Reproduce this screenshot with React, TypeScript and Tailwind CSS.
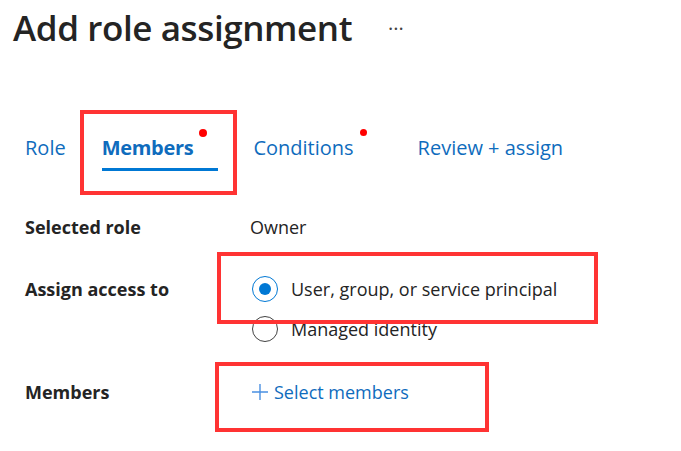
import React from "react";

const font = { fontFamily: '"Open Sans", "Noto Sans", sans-serif' };

export default function App() {
  return (
    <div className="relative w-[681px] h-[451px] bg-white overflow-hidden text-[#242424]" style={font}>
      {/* Title */}
      <div className="flex items-center pl-[13px] pt-[6px] h-[50px]">
        <h1 className="text-[35px] leading-[40px] font-semibold tracking-[-0.4px] text-[#242424]">Add role assignment</h1>
        <span className="ml-[36px] text-[20px] leading-none text-[#424242] mt-[2px]">···</span>
      </div>

      {/* Tabs */}
      <div className="flex items-end mt-[78px] pl-[25px] h-[40px]">
        <div className="relative text-[20px] leading-[24px] text-[#0f6cbd] pb-[8px]">Role</div>
        <div className="relative ml-[36px] text-[20px] leading-[24px] font-bold tracking-[-0.3px] text-[#0f6cbd] pb-[8px]">
          Members
          <span className="absolute right-[-14px] top-[-7px] w-[8px] h-[8px] rounded-full bg-[#ff0000]" />
          <span className="absolute left-0 right-[-25px] bottom-[-3px] h-[3px] bg-[#0078d4]" />
        </div>
        <div className="relative ml-[60px] text-[20px] leading-[24px] text-[#0f6cbd] pb-[8px]">
          Conditions
          <span className="absolute right-[-13px] top-[-7px] w-[7px] h-[7px] rounded-full bg-[#ff0000]" />
        </div>
        <div className="ml-[64px] text-[20px] leading-[24px] text-[#0f6cbd] pb-[8px]">Review + assign</div>
      </div>

      {/* Form rows */}
      <div className="pl-[25px] mt-[46px] text-[18px] leading-[24px]">
        <div className="flex items-center h-[26px]">
          <div className="w-[225px] font-bold">Selected role</div>
          <div>Owner</div>
        </div>
        <div className="flex items-start mt-[36px]">
          <div className="w-[227px] font-bold h-[26px] flex items-center">Assign access to</div>
          <div className="flex flex-col gap-[14px]">
            <div className="flex items-center gap-[13px] h-[26px]">
              <span className="w-[26px] h-[26px] rounded-full border border-[#0078d4] flex items-center justify-center">
                <span className="w-[12px] h-[12px] rounded-full bg-[#0078d4]" />
              </span>
              <span>User, group, or service principal</span>
            </div>
            <div className="flex items-center gap-[13px] h-[26px]">
              <span className="w-[26px] h-[26px] rounded-full border border-[#424242]" />
              <span>Managed identity</span>
            </div>
          </div>
        </div>
        <div className="flex items-center mt-[37px] h-[26px]">
          <div className="w-[226px] font-bold">Members</div>
          <div className="flex items-center text-[#0f6cbd]">
            <svg width="18" height="18" viewBox="0 0 18 18" className="mr-[5px]">
              <path d="M9 1v16M1 9h16" stroke="#4a90e2" strokeWidth="1.4" />
            </svg>
            <span>Select members</span>
          </div>
        </div>
      </div>

      {/* Annotation boxes */}
      <div className="absolute left-[80px] top-[110px] w-[157px] h-[85px] border-[4px] border-[#ff3333]" />
      <div className="absolute left-[217px] top-[252px] w-[381px] h-[72px] border-[4px] border-[#ff3333]" />
      <div className="absolute left-[215px] top-[362px] w-[274px] h-[70px] border-[4px] border-[#ff3333]" />
    </div>
  );
}
